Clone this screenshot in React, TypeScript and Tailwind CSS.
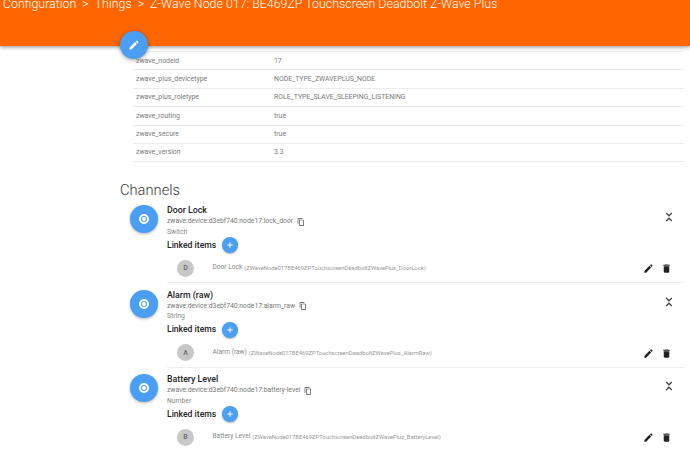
import React from 'react';
import { Plus } from 'lucide-react';

interface Channel {
  name: string;
  uid: string;
  type: string;
  letter: string;
  itemLabel: string;
  itemName: string;
}

const rows = [
  ['zwave_nodeid', '17'],
  ['zwave_plus_devicetype', 'NODE_TYPE_ZWAVEPLUS_NODE'],
  ['zwave_plus_roletype', 'ROLE_TYPE_SLAVE_SLEEPING_LISTENING'],
  ['zwave_routing', 'true'],
  ['zwave_secure', 'true'],
  ['zwave_version', '3.3'],
];

const channels: Channel[] = [
  {
    name: 'Door Lock',
    uid: 'zwave:device:d3ebf740:node17:lock_door',
    type: 'Switch',
    letter: 'D',
    itemLabel: 'Door Lock',
    itemName: '(ZWaveNode017BE469ZPTouchscreenDeadboltZWavePlus_DoorLock)',
  },
  {
    name: 'Alarm (raw)',
    uid: 'zwave:device:d3ebf740:node17:alarm_raw',
    type: 'String',
    letter: 'A',
    itemLabel: 'Alarm (raw)',
    itemName: '(ZWaveNode017BE469ZPTouchscreenDeadboltZWavePlus_AlarmRaw)',
  },
  {
    name: 'Battery Level',
    uid: 'zwave:device:d3ebf740:node17:battery-level',
    type: 'Number',
    letter: 'B',
    itemLabel: 'Battery Level',
    itemName: '(ZWaveNode017BE469ZPTouchscreenDeadboltZWavePlus_BatteryLevel)',
  },
];

const PencilIcon = ({ className }: { className: string }) => (
  <svg viewBox="0 0 24 24" className={className} fill="currentColor">
    <path d="M3 17.25V21h3.75L17.81 9.94l-3.75-3.75L3 17.25zM20.71 7.04a1 1 0 0 0 0-1.41l-2.34-2.34a1 1 0 0 0-1.41 0l-1.83 1.83 3.75 3.75 1.83-1.83z" />
  </svg>
);

const TrashIcon = () => (
  <svg viewBox="0 0 24 24" className="w-[11px] h-[11px] text-[#222]" fill="currentColor">
    <path d="M6 19c0 1.1.9 2 2 2h8c1.1 0 2-.9 2-2V7H6v12zM19 4h-3.5l-1-1h-5l-1 1H5v2h14V4z" />
  </svg>
);

const CopyIcon = () => (
  <svg viewBox="0 0 24 24" className="w-[8px] h-[8px] text-[#444]" fill="currentColor">
    <path d="M16 1H4c-1.1 0-2 .9-2 2v14h2V3h12V1zm3 4H8c-1.1 0-2 .9-2 2v14c0 1.1.9 2 2 2h11c1.1 0 2-.9 2-2V7c0-1.1-.9-2-2-2zm0 16H8V7h11v14z" />
  </svg>
);

const CollapseIcon = () => (
  <svg viewBox="0 0 8 10" className="w-[8px] h-[10px] text-[#444]" fill="none" stroke="currentColor" strokeWidth="1.3">
    <path d="M1.2 1l2.8 2.8L6.8 1M1.2 9L4 6.2 6.8 9" />
  </svg>
);

const ChannelRow = ({ channel, last }: { channel: Channel; last: boolean }) => (
  <div className="flex h-[79px] mb-[5.5px]">
    <div className="w-[47px] shrink-0 pl-[10px] pt-[1px]">
      <div className="w-[28px] h-[28px] rounded-full bg-[#4a9ff5] shadow-[0_1px_3px_rgba(0,0,0,0.3)] flex items-center justify-center">
        <div className="w-[10px] h-[10px] rounded-full border-[2px] border-white flex items-center justify-center">
          <div className="w-[4px] h-[4px] rounded-full bg-white" />
        </div>
      </div>
    </div>
    <div className={`flex-1 relative ${last ? '' : 'border-b border-[#eeeeee]'}`}>
      <div className="text-[8.8px] leading-[12px] font-medium text-[#222]">{channel.name}</div>
      <div className="flex items-center gap-[4px] text-[6.8px] leading-[10.5px] text-[#777]">
        <span>{channel.uid}</span>
        <CopyIcon />
      </div>
      <div className="text-[6.8px] leading-[10px] text-[#888]">{channel.type}</div>
      <div className="flex items-center gap-[6px] h-[17px]">
        <span className="text-[8.6px] font-medium text-[#222]">Linked items</span>
        <span className="w-[16px] h-[16px] rounded-full bg-[#4a9ff5] shadow-[0_1px_2px_rgba(0,0,0,0.3)] flex items-center justify-center">
          <Plus className="w-[8px] h-[8px] text-white" strokeWidth={3} />
        </span>
      </div>
      <div className="flex items-center h-[18px] mt-[5.5px] pl-[10px]">
        <span className="w-[17px] h-[17px] rounded-full bg-[#c8c8c8] flex items-center justify-center text-[7px] font-medium text-[#666]">
          {channel.letter}
        </span>
        <span className="ml-[18.5px] text-[6.6px] text-[#888]">{channel.itemLabel}</span>
        <span className="ml-[2px] text-[5.8px] text-[#999]">{channel.itemName}</span>
      </div>
      <div className="absolute right-[11.5px] top-[8px]">
        <CollapseIcon />
      </div>
      <div className="absolute right-[12.5px] top-[59px] flex items-center gap-[7px]">
        <PencilIcon className="w-[11px] h-[11px] text-[#222]" />
        <TrashIcon />
      </div>
    </div>
  </div>
);

export default function App() {
  return (
    <div className="relative w-[690px] h-[456px] overflow-hidden bg-white font-['Roboto',sans-serif]">
      <div className="h-[46px] bg-[#ff6600] shadow-[0_1px_4px_rgba(0,0,0,0.45)] overflow-hidden pl-[3px]">
        <div className="flex items-center -mt-[5px] h-[18px] text-[12.4px] font-light text-white whitespace-nowrap">
          <span>Configuration</span>
          <span className="mx-[6px]">&gt;</span>
          <span>Things</span>
          <span className="mx-[6px]">&gt;</span>
          <span>Z-Wave Node 017: BE469ZP Touchscreen Deadbolt Z-Wave Plus</span>
        </div>
      </div>

      <button className="absolute left-[120px] top-[31px] w-[28px] h-[28px] rounded-full bg-[#4a9ff5] shadow-[0_1px_4px_rgba(0,0,0,0.4)] flex items-center justify-center">
        <PencilIcon className="w-[12px] h-[12px] text-white" />
      </button>

      <div className="ml-[133px] mr-[6px] mt-[5px] border-t border-[#ececec]">
        {rows.map(([key, value]) => (
          <div key={key} className="flex items-center h-[18.4px] border-b border-[#ececec] pl-[3px] text-[6.9px] text-[#7a7a7a]">
            <span className="w-[138px]">{key}</span>
            <span>{value}</span>
          </div>
        ))}
      </div>

      <div className="ml-[120px] mt-[19px] text-[14.7px] leading-[18px] font-light text-[#333]">Channels</div>

      <div className="ml-[120px] mr-[6px] mt-[5px]">
        {channels.map((channel, i) => (
          <ChannelRow key={channel.name} channel={channel} last={i === channels.length - 1} />
        ))}
      </div>
    </div>
  );
}
